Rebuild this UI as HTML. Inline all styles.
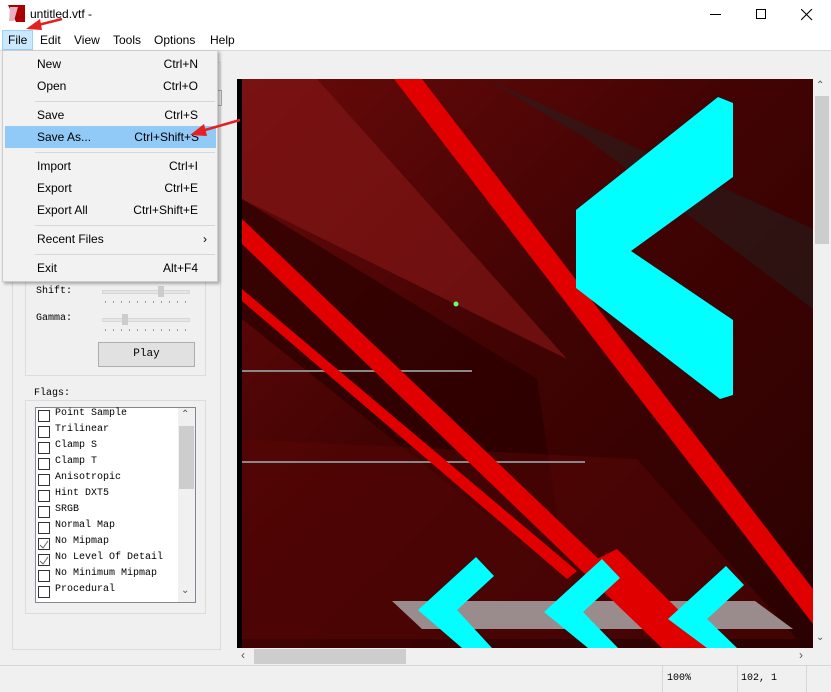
<!DOCTYPE html>
<html><head><meta charset="utf-8"><style>
*{margin:0;padding:0;box-sizing:border-box}
body{width:831px;height:692px;overflow:hidden;background:#f0f0f0;font-family:"Liberation Sans",sans-serif;position:relative}
.abs{position:absolute;white-space:nowrap}
.title{left:0;top:0;width:831px;height:30px;background:#fff}
.menubar{left:0;top:30px;width:831px;height:21px;background:#fff;border-bottom:1px solid #d9d9d9;font-size:12px}
.menubar span{position:absolute;top:3px}
.mono{font-family:"Liberation Mono","Noto Sans CJK SC",monospace;font-size:10px;color:#000;white-space:nowrap}
.menu{left:2px;top:50px;width:216px;height:232px;background:#f2f2f2;border:1px solid #ccc;box-shadow:2px 2px 3px rgba(0,0,0,.3);font-size:12px;color:#000}
.mi{position:absolute;left:0;width:214px;height:22px;line-height:22px}
.mi .l{position:absolute;left:34px}
.mi .r{position:absolute;right:19px}
.sep{position:absolute;left:32px;width:180px;height:1px;background:#d7d7d7}
.cb{position:absolute;left:38px;width:12px;height:12px;border:1px solid #333;background:#fff}
.it{position:absolute;left:55px;white-space:nowrap}
</style></head><body>
<div class="abs title"></div>
<svg class="abs" style="left:8px;top:5px" width="17" height="17"><rect width="17" height="17" fill="#fff"/><polygon points="0,0 17,0 17,17 8,17" fill="#a00"/><polygon points="2,2 10,2 6,16 1,16" fill="#e8b0c0"/></svg>
<div class="abs" style="left:30px;top:7px;font-size:12px">untitled.vtf -</div>
<div class="abs" style="left:710px;top:14px;width:11px;height:1px;background:#000"></div>
<div class="abs" style="left:756px;top:9px;width:10px;height:10px;border:1px solid #000"></div>
<svg class="abs" style="left:801px;top:9px" width="12" height="12"><path d="M0,0L11,11M11,0L0,11" stroke="#000" stroke-width="1.1"/></svg>
<div class="abs menubar">
<div class="abs" style="left:2px;top:0;width:31px;height:20px;background:#cce8ff;border:1px solid #99d1ff"></div>
<span style="left:8px">File</span><span style="left:40px">Edit</span><span style="left:74px">View</span><span style="left:113px">Tools</span><span style="left:154px">Options</span><span style="left:210px">Help</span>
</div>

<!-- left panel -->
<div class="abs" style="left:12px;top:62px;width:209px;height:588px;border:1px solid #dcdcdc"></div>
<div class="abs" style="left:25px;top:80px;width:181px;height:296px;border:1px solid #dcdcdc"></div>
<div class="abs" style="left:210px;top:90px;width:12px;height:16px;border:1px solid #aaa;background:#e8e8e8"></div>
<div class="abs mono" style="left:36px;top:286px">Shift:</div>
<div class="abs mono" style="left:36px;top:313px">Gamma:</div>
<div class="abs" style="left:102px;top:290px;width:88px;height:4px;background:#e6e6e6;border:1px solid #d6d6d6"></div>
<div class="abs" style="left:158px;top:286px;width:6px;height:11px;background:#ccc"></div>
<div class="abs" style="left:102px;top:318px;width:88px;height:4px;background:#e6e6e6;border:1px solid #d6d6d6"></div>
<div class="abs" style="left:122px;top:314px;width:6px;height:11px;background:#ccc"></div>
<div class="abs" style="left:105px;top:301px;width:84px;height:2px;background:repeating-linear-gradient(90deg,#999 0 1px,transparent 1px 8px)"></div>
<div class="abs" style="left:105px;top:329px;width:84px;height:2px;background:repeating-linear-gradient(90deg,#999 0 1px,transparent 1px 8px)"></div>
<div class="abs mono" style="left:98px;top:342px;width:97px;height:25px;background:#e1e1e1;border:1px solid #adadad;text-align:center;line-height:23px;font-size:11px">Play</div>
<div class="abs" style="left:25px;top:400px;width:181px;height:214px;border:1px solid #dcdcdc"></div>
<div class="abs mono" style="left:32px;top:388px;background:#f0f0f0;padding:0 2px">Flags:</div>
<div class="abs" style="left:35px;top:407px;width:161px;height:196px;border:1px solid #828790;background:#fff"></div>
<div class="abs" style="left:178px;top:408px;width:17px;height:194px;background:#f0f0f0"></div>
<div class="abs" style="left:179px;top:426px;width:15px;height:63px;background:#cdcdcd"></div>
<div class="abs" style="left:181px;top:409px;font-size:10px;color:#555">&#8963;</div>
<div class="abs" style="left:181px;top:585px;font-size:10px;color:#555">&#8964;</div>
<div class="abs mono" style="left:0;top:0">
<div class="cb" style="top:410px"></div><div class="it" style="top:408px">Point Sample</div>
<div class="cb" style="top:426px"></div><div class="it" style="top:424px">Trilinear</div>
<div class="cb" style="top:442px"></div><div class="it" style="top:440px">Clamp S</div>
<div class="cb" style="top:458px"></div><div class="it" style="top:456px">Clamp T</div>
<div class="cb" style="top:474px"></div><div class="it" style="top:472px">Anisotropic</div>
<div class="cb" style="top:490px"></div><div class="it" style="top:488px">Hint DXT5</div>
<div class="cb" style="top:506px"></div><div class="it" style="top:504px">SRGB</div>
<div class="cb" style="top:522px"></div><div class="it" style="top:520px">Normal Map</div>
<div class="cb" style="top:538px"></div><div class="it" style="top:536px">No Mipmap</div>
<div class="cb" style="top:554px"></div><div class="it" style="top:552px">No Level Of Detail</div>
<div class="cb" style="top:570px"></div><div class="it" style="top:568px">No Minimum Mipmap</div>
<div class="cb" style="top:586px"></div><div class="it" style="top:584px">Procedural</div>
</div>
<svg class="abs" style="left:39px;top:539px" width="10" height="26"><path d="M1,6L4,9L9,2M1,22L4,25L9,18" stroke="#666" fill="none"/></svg>

<!-- image -->
<svg class="abs" style="left:237px;top:79px" width="576" height="569">
<defs><linearGradient id="g" x1="0" y1="0" x2="1" y2="1"><stop offset="0" stop-color="#6a0a0a"/><stop offset=".45" stop-color="#420303"/><stop offset="1" stop-color="#2a0101"/></linearGradient></defs>
<rect width="576" height="569" fill="url(#g)"/>
<rect width="5" height="569" fill="#000"/>
<polygon points="5,0 80,0 330,280 5,120" fill="#801616" opacity=".7"/>
<polygon points="5,120 300,300 330,500 5,240" fill="#2a0000" opacity=".7"/>
<polygon points="250,0 576,150 576,230 350,60" fill="#222" opacity=".5"/>
<polygon points="5,360 400,380 560,560 5,560" fill="#5a0606" opacity=".5"/>
<polygon points="155,522 518,522 556,550 185,550" fill="#9a8c8c"/>
<line x1="5" y1="292" x2="235" y2="292" stroke="#888" stroke-width="2"/>
<line x1="5" y1="383" x2="348" y2="383" stroke="#888" stroke-width="2"/>
<polygon points="157,0 185,0 576,510 576,545" fill="#e00000"/>
<polygon points="5,140 5,165 425,569 455,569" fill="#e00000"/>
<polygon points="5,210 5,222 330,500 340,492" fill="#e00000"/>
<polygon points="360,480 380,470 480,569 455,569" fill="#e00000"/>
<polygon points="339,131 481,18 496,24 496,98 394,172 496,241 496,316 483,320 339,209" fill="#00ffff"/>
<polygon points="181,531 239,478 257,497 220,531 255,569 225,569" fill="#00ffff"/>
<polygon points="307,533 365,480 383,499 346,533 381,569 351,569" fill="#00ffff"/>
<polygon points="431,540 489,487 507,506 470,540 500,569 470,569" fill="#00ffff"/>
<circle cx="219" cy="225" r="2.5" fill="#6f6"/>
</svg>
<!-- scrollbars -->
<div class="abs" style="left:813px;top:79px;width:18px;height:569px;background:#f0f0f0"></div>
<div class="abs" style="left:815px;top:96px;width:14px;height:148px;background:#cdcdcd"></div>
<div class="abs" style="left:816px;top:80px;font-size:10px;color:#555">&#8963;</div>
<div class="abs" style="left:816px;top:632px;font-size:10px;color:#555">&#8964;</div>
<div class="abs" style="left:237px;top:648px;width:576px;height:17px;background:#f0f0f0"></div>
<div class="abs" style="left:254px;top:649px;width:152px;height:15px;background:#cdcdcd"></div>
<div class="abs" style="left:241px;top:648px;font-size:12px;color:#555">&#8249;</div>
<div class="abs" style="left:799px;top:648px;font-size:12px;color:#555">&#8250;</div>
<!-- status -->
<div class="abs" style="left:0;top:665px;width:831px;height:27px;border-top:1px solid #d7d7d7;background:#f0f0f0"></div>
<div class="abs" style="left:662px;top:666px;width:1px;height:26px;background:#d7d7d7"></div>
<div class="abs" style="left:737px;top:666px;width:1px;height:26px;background:#d7d7d7"></div>
<div class="abs" style="left:806px;top:666px;width:1px;height:26px;background:#d7d7d7"></div>
<div class="abs mono" style="left:667px;top:673px">100%</div>
<div class="abs mono" style="left:741px;top:673px">102, 1</div>

<!-- dropdown menu -->
<div class="abs menu">
<div class="mi" style="top:2px"><span class="l">New</span><span class="r">Ctrl+N</span></div>
<div class="mi" style="top:24px"><span class="l">Open</span><span class="r">Ctrl+O</span></div>
<div class="sep" style="top:50px"></div>
<div class="mi" style="top:53px"><span class="l">Save</span><span class="r">Ctrl+S</span></div>
<div class="mi" style="top:75px;left:2px;width:211px;background:#91c9f7"><span class="l" style="left:32px">Save As...</span><span class="r" style="right:17px">Ctrl+Shift+S</span></div>
<div class="sep" style="top:101px"></div>
<div class="mi" style="top:104px"><span class="l">Import</span><span class="r">Ctrl+I</span></div>
<div class="mi" style="top:126px"><span class="l">Export</span><span class="r">Ctrl+E</span></div>
<div class="mi" style="top:148px"><span class="l">Export All</span><span class="r">Ctrl+Shift+E</span></div>
<div class="sep" style="top:174px"></div>
<div class="mi" style="top:177px"><span class="l">Recent Files</span><span class="r" style="right:10px">&#8250;</span></div>
<div class="sep" style="top:203px"></div>
<div class="mi" style="top:206px"><span class="l">Exit</span><span class="r">Alt+F4</span></div>
</div>

<!-- red arrows -->
<svg class="abs" style="left:0;top:0" width="260" height="160">
<path d="M62,19L38,25" stroke="#e52020" stroke-width="2.5"/><polygon points="26,29 40,19 42,30" fill="#e52020"/>
<path d="M240,120L205,130" stroke="#e52020" stroke-width="2.5"/><polygon points="190,135 204,124 207,136" fill="#e52020"/>
</svg>
</body></html>
